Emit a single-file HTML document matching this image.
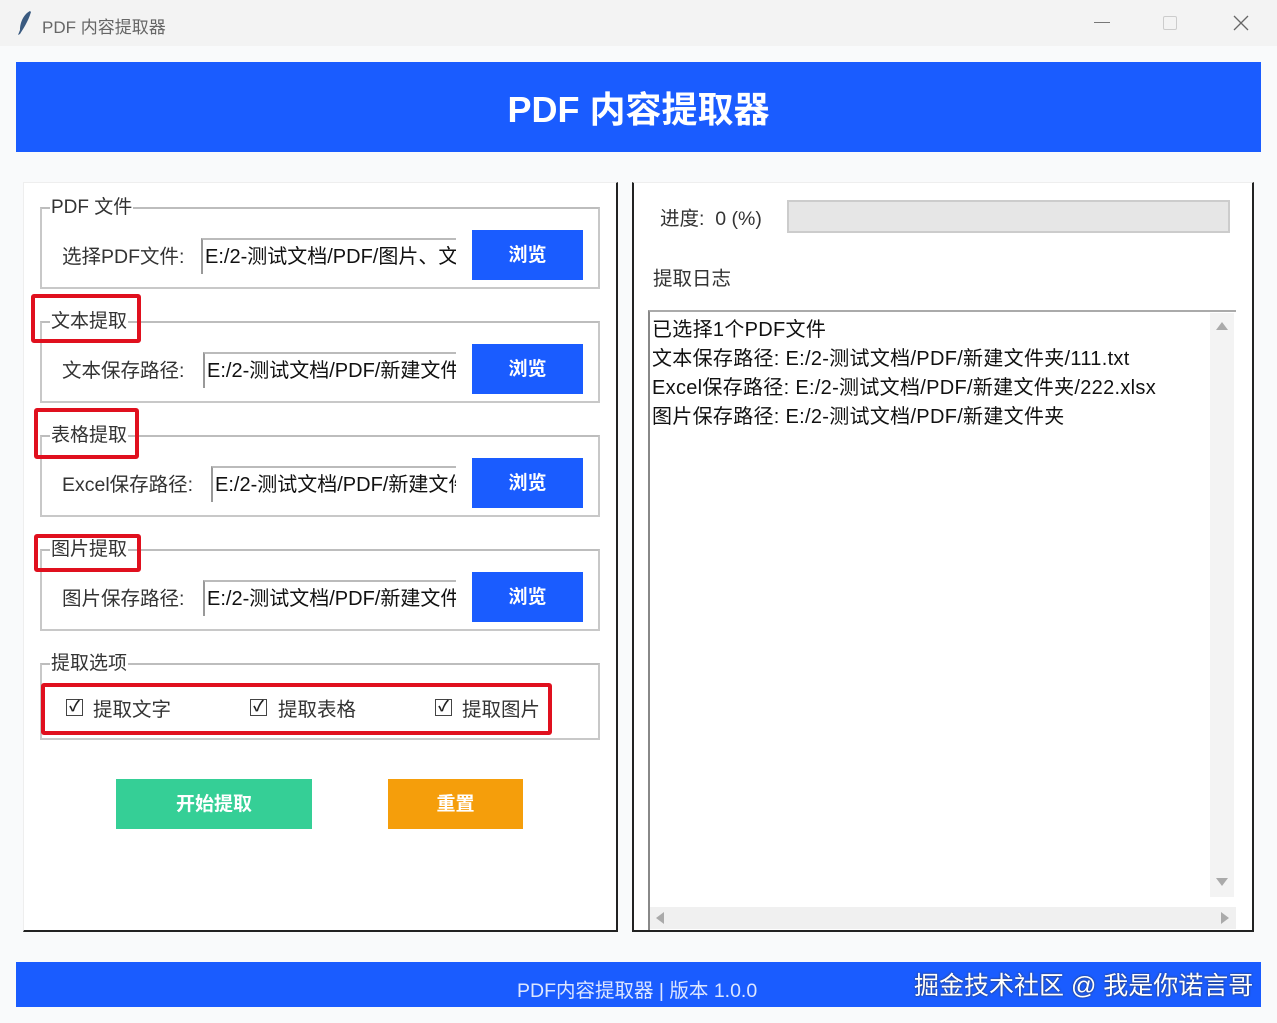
<!DOCTYPE html>
<html><head><meta charset="utf-8"><style>
*{margin:0;padding:0;box-sizing:border-box}
body{width:1277px;height:1023px;overflow:hidden;background:#f9fafb;font-family:"Liberation Sans","Noto Sans CJK SC",sans-serif;position:relative;color:#222}
.a{position:absolute}
.tb{left:0;top:0;width:1277px;height:46px;background:#f3f3f3}
.grp{position:absolute;border:2px solid #c8c8c8;border-top-color:#bdbdbd}
.gl{position:absolute;top:-14px;left:8px;background:#fff;font-size:19px;color:#333;padding:0 1px;line-height:26px}
.lbl{position:absolute;font-size:19.5px;color:#333;line-height:26px}
.ent{position:absolute;background:#fff;border-left:2px solid #999;border-top:2px solid #bbb;font-size:20px;line-height:34px;padding-left:2px;overflow:hidden;white-space:nowrap;color:#111;height:36px}
.btn{position:absolute;background:#1a5cff;color:#fff;font-size:19px;font-weight:bold;text-align:center;line-height:52px;width:111px;height:50px}
.red{position:absolute;border:4px solid #e0101e;border-radius:3px}
.cb{position:absolute;width:17px;height:17px;border:1.5px solid #444;background:#fff;font-size:15px;line-height:14px;text-align:center;font-weight:bold}
</style></head><body>
<div class="a tb"></div>
<svg class="a" style="left:16px;top:10px" width="18" height="26" viewBox="0 0 18 26"><path d="M14 1C8 4 4 12 4 20l-2 5 2-1c3-5 8-12 11-22z" fill="#3a5a80"/></svg>
<div class="a" style="left:42px;top:13px;font-size:17px;color:#666">PDF 内容提取器</div>
<div class="a" style="left:1094px;top:22px;width:16px;height:1px;background:#777"></div>
<div class="a" style="left:1163px;top:16px;width:14px;height:14px;border:1px solid #ccc;border-radius:2px"></div>
<svg class="a" style="left:1233px;top:15px" width="16" height="16"><path d="M1 1L15 15M15 1L1 15" stroke="#666" stroke-width="1.3"/></svg>

<div class="a" style="left:16px;top:62px;width:1245px;height:90px;background:#1a5cff;color:#fff;font-size:36px;font-weight:bold;text-align:center;line-height:96px">PDF 内容提取器</div>

<div class="a" style="left:23px;top:182px;width:595px;height:750px;background:#fff;border-left:1px solid #eee;border-top:1px solid #eee;border-right:2px solid #222;border-bottom:2px solid #222"></div>
<div class="a" style="left:632px;top:182px;width:622px;height:750px;background:#fff;border-left:2px solid #222;border-top:1px solid #eee;border-right:2px solid #222;border-bottom:2px solid #222"></div>

<div class="grp" style="left:40px;top:207px;width:560px;height:82px"><div class="gl">PDF 文件</div></div>
<div class="lbl" style="left:62px;top:244px">选择PDF文件:</div>
<div class="ent" style="left:201px;top:238px;width:255px">E:/2-测试文档/PDF/图片、文</div>
<div class="btn" style="left:472px;top:230px">浏览</div>

<div class="grp" style="left:40px;top:321px;width:560px;height:82px"><div class="gl">文本提取</div></div>
<div class="lbl" style="left:62px;top:358px">文本保存路径:</div>
<div class="ent" style="left:203px;top:352px;width:253px">E:/2-测试文档/PDF/新建文件</div>
<div class="btn" style="left:472px;top:344px">浏览</div>

<div class="grp" style="left:40px;top:435px;width:560px;height:82px"><div class="gl">表格提取</div></div>
<div class="lbl" style="left:62px;top:472px">Excel保存路径:</div>
<div class="ent" style="left:211px;top:466px;width:245px">E:/2-测试文档/PDF/新建文件</div>
<div class="btn" style="left:472px;top:458px">浏览</div>

<div class="grp" style="left:40px;top:549px;width:560px;height:82px"><div class="gl">图片提取</div></div>
<div class="lbl" style="left:62px;top:586px">图片保存路径:</div>
<div class="ent" style="left:203px;top:580px;width:253px">E:/2-测试文档/PDF/新建文件</div>
<div class="btn" style="left:472px;top:572px">浏览</div>

<div class="grp" style="left:40px;top:663px;width:560px;height:77px"><div class="gl">提取选项</div></div>
<div class="cb" style="left:66px;top:699px">✓</div><div class="lbl" style="left:93px;top:697px">提取文字</div>
<div class="cb" style="left:250px;top:699px">✓</div><div class="lbl" style="left:278px;top:697px">提取表格</div>
<div class="cb" style="left:435px;top:699px">✓</div><div class="lbl" style="left:462px;top:697px">提取图片</div>

<div class="red" style="left:31px;top:294px;width:110px;height:49px"></div>
<div class="red" style="left:34px;top:408px;width:105px;height:51px"></div>
<div class="red" style="left:34px;top:534px;width:107px;height:38px"></div>
<div class="red" style="left:41px;top:683px;width:511px;height:52px"></div>

<div class="a" style="left:116px;top:779px;width:196px;height:50px;background:#35cf96;color:#fff;font-size:19px;font-weight:bold;text-align:center;line-height:52px">开始提取</div>
<div class="a" style="left:388px;top:779px;width:135px;height:50px;background:#f59e0b;color:#fff;font-size:19px;font-weight:bold;text-align:center;line-height:52px">重置</div>

<div class="lbl" style="left:660px;top:206px">进度:&nbsp;&nbsp;0 (%)</div>
<div class="a" style="left:787px;top:200px;width:443px;height:33px;background:#e6e6e6;border:2px solid #ccc"></div>
<div class="lbl" style="left:653px;top:266px">提取日志</div>
<div class="a" style="left:648px;top:310px;width:588px;height:620px;border-left:2px solid #888;border-top:2px solid #aaa;background:#fff"></div>
<div class="a" style="left:652px;top:316px;font-size:20px;line-height:29px;color:#111;letter-spacing:0.3px">已选择1个PDF文件<br>文本保存路径: E:/2-测试文档/PDF/新建文件夹/111.txt<br>Excel保存路径: E:/2-测试文档/PDF/新建文件夹/222.xlsx<br>图片保存路径: E:/2-测试文档/PDF/新建文件夹</div>
<div class="a" style="left:1210px;top:313px;width:24px;height:584px;background:#f3f3f3"></div>
<div class="a" style="left:1216px;top:322px;width:0;height:0;border:6px solid transparent;border-bottom:8px solid #aaa;border-top:0"></div>
<div class="a" style="left:1216px;top:878px;width:0;height:0;border:6px solid transparent;border-top:8px solid #aaa;border-bottom:0"></div>
<div class="a" style="left:650px;top:907px;width:586px;height:22px;background:#f0f0f0"></div>
<div class="a" style="left:656px;top:912px;width:0;height:0;border:6px solid transparent;border-right:8px solid #aaa;border-left:0"></div>
<div class="a" style="left:1221px;top:912px;width:0;height:0;border:6px solid transparent;border-left:8px solid #aaa;border-right:0"></div>

<div class="a" style="left:16px;top:962px;width:1245px;height:45px;background:#1a5cff"></div>
<div class="a" style="left:517px;top:974px;font-size:19.5px;color:#dde6ff">PDF内容提取器 | 版本 1.0.0</div>
<div class="a" style="left:914px;top:966px;font-size:25px;color:#fff;text-shadow:0 0 2px #333">掘金技术社区 @ 我是你诺言哥</div>
</body></html>
